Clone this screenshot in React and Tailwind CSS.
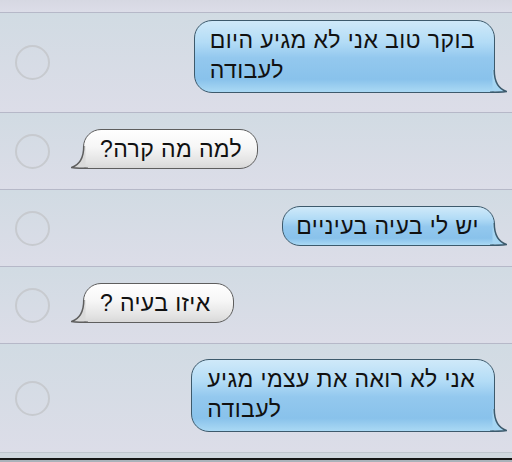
import React from 'react';

const BLUE_BG =
  'bg-[linear-gradient(to_bottom,#cfe9f9_0%,#b3dcf6_30%,#93c8ee_52%,#89c2eb_82%,#aad9f4_100%)]';
const GRAY_BG = 'bg-[linear-gradient(to_bottom,#ffffff_0%,#f6f6f6_45%,#e2e2e2_85%,#d8d8d8_100%)]';

const Tail = ({ side, fill, stroke }) => {
  const inner = (
    <>
      <path
        d="M5.5 1 L7.25 1 C7.25 13 12 20 19.5 22.5 C14 23.6 9 22.6 3 22.6 L5.5 22.6 Z"
        fill={fill}
      />
      <path
        d="M7.25 1 C7.25 13 12 20 19.5 22.5 C14 23.6 9 23.25 3 23.25"
        fill="none"
        stroke={stroke}
        strokeWidth="1.5"
      />
    </>
  );
  return (
    <svg
      width="20"
      height="24"
      viewBox="0 0 20 24"
      className={side === 'right' ? 'absolute bottom-0 right-[-12px]' : 'absolute bottom-0 left-[-12px]'}
    >
      {side === 'right' ? inner : <g transform="translate(20,0) scale(-1,1)">{inner}</g>}
    </svg>
  );
};

const Bubble = ({ me, two, pad, children }) => (
  <div className="relative">
    <div
      dir="rtl"
      className={`text-left text-[23px] tracking-[0.4px] leading-[30px] text-[#111] border-[1.5px] rounded-[18px] ${
        me
          ? `${BLUE_BG} border-[#3d5a6c] rounded-br-[4px]`
          : `${GRAY_BG} border-[#5e5e5e] rounded-bl-[4px]`
      } ${pad} pt-[4px] ${two ? 'pb-[7px]' : 'pb-[4px]'}`}
    >
      {children}
    </div>
    <Tail
      side={me ? 'right' : 'left'}
      fill={me ? '#a6d6f3' : '#dadada'}
      stroke={me ? '#3d5a6c' : '#5e5e5e'}
    />
  </div>
);

const Circle = () => (
  <div className="w-[35px] h-[35px] shrink-0 rounded-full border-[2px] border-[#c7cacf] self-center ml-[15px]" />
);

const Row = ({ h, pt, me, two, pad, children, last }) => (
  <div
    className={`flex items-start bg-linear-to-b from-[#d1dbe3] to-[#dcdde8] border-b ${
      last ? 'border-[#bfc6ce]' : 'border-[#b6b8c8]'
    } ${h}`}
  >
    <Circle />
    <div className={`${pt} ${me ? 'ml-auto mr-[17px]' : 'ml-[33px]'}`}>
      <Bubble me={me} two={two} pad={pad}>
        {children}
      </Bubble>
    </div>
  </div>
);

export default function App() {
  return (
    <div className="w-[512px] h-[462px] overflow-hidden bg-[#d3dbe2] font-['Liberation_Sans',Arial,sans-serif]">
      <div className="h-[13px] bg-linear-to-b from-[#d6d8e2] to-[#dcdde8] border-b border-[#b6b8c8]" />
      <Row h="h-[100px]" pt="pt-[7px]" pad="pl-[15px] pr-[19px]" me two>
        בוקר טוב אני לא מגיע היום
        <br />
        לעבודה
      </Row>
      <Row h="h-[77px]" pt="pt-[16px]" pad="pl-[16px] pr-[15px]">
        למה מה קרה?
      </Row>
      <Row h="h-[77px]" pt="pt-[16px]" pad="pl-[13px] pr-[15px]" me>
        יש לי בעיה בעיניים
      </Row>
      <Row h="h-[77px]" pt="pt-[16px]" pad="pl-[16px] pr-[22px]">
        איזו בעיה ?
      </Row>
      <Row h="h-[109px]" pt="pt-[15px]" pad="pl-[15px] pr-[19px]" me two last>
        אני לא רואה את עצמי מגיע
        <br />
        לעבודה
      </Row>
      <div className="h-[5px] bg-[#d0d8df]" />
      <div className="h-[2px] bg-[#161616]" />
      <div className="h-[3px] bg-[#aab2ba]" />
    </div>
  );
}
